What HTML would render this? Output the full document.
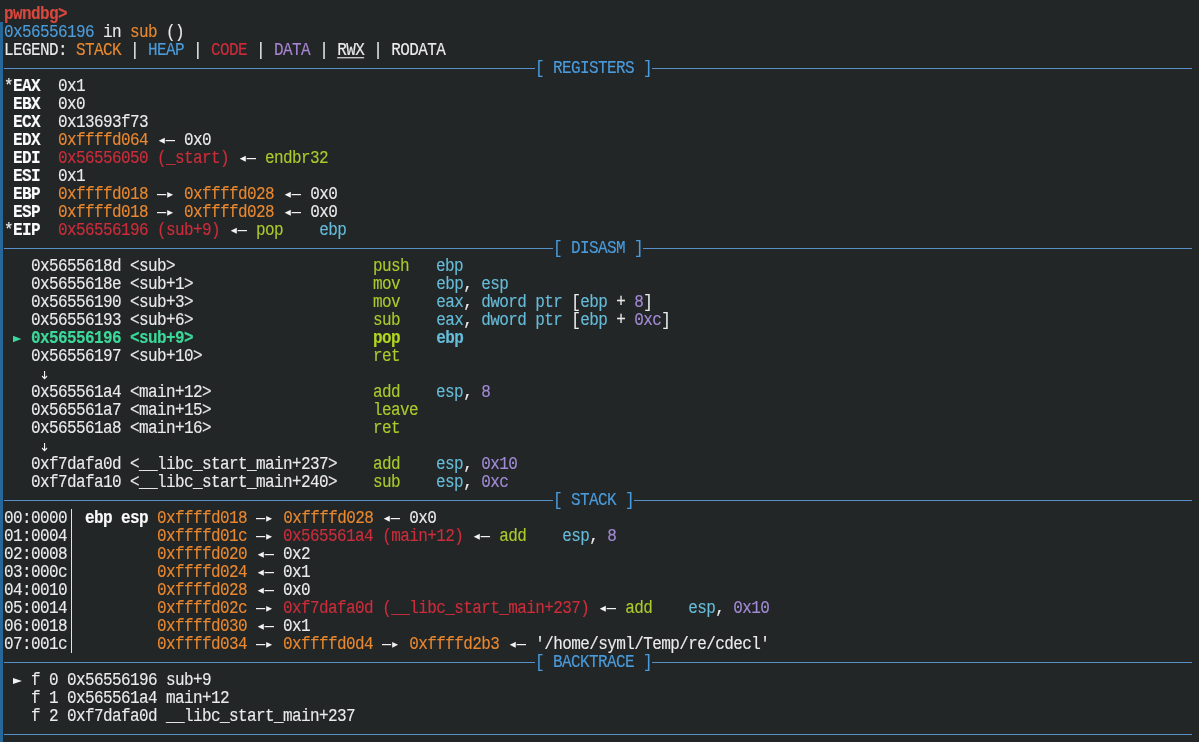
<!DOCTYPE html>
<html><head><meta charset="utf-8"><style>
html,body{margin:0;padding:0;}
body{width:1199px;height:742px;background:#232627;overflow:hidden;position:relative;font-family:"Liberation Mono",monospace;}
.bar{position:absolute;left:0;top:22px;width:3px;height:720px;background:#26679a;}
.r{position:absolute;left:4px;height:18px;line-height:18px;font-size:16px;letter-spacing:-0.6px;transform:scaleY(1.1);transform-origin:0 13px;will-change:transform;-webkit-text-stroke:0.12px currentColor;white-space:pre;color:#ebebeb;margin-top:2px;}
.b{font-weight:bold;}
.u{text-decoration:underline;text-underline-offset:1.5px;}
.w{color:#ebebeb;}
.w.b{color:#fafafa;}
.red{color:#cd2d3b;}
.red.b{color:#d8483e;}
.org{color:#e9882f;}
.blu{color:#4c9cdb;}
.pur{color:#a684cf;}
.pur2{color:#a38bd6;}
.yg{color:#aacb2c;}
.yg.b{color:#b0d620;}
.cy{color:#66bcd9;}
.grn{color:#3cd89a;}
.hd{color:#4a9bdc;}
.ln{position:absolute;height:1px;background:#5790c6;}
.vb{position:absolute;left:71px;width:1px;background:#e4e4e4;}
i.g{display:inline-block;width:9px;height:18px;vertical-align:top;position:relative;font-style:normal;}
svg.g{display:inline-block;vertical-align:top;position:relative;top:-2px;}

</style></head><body>
<div class="bar"></div>
<div class="r" style="top:4px"><span class="red b">pwndbg&gt;</span></div>
<div class="r" style="top:22px"><span class="blu">0x56556196</span><span class="w"> in </span><span class="org">sub</span><span class="w"> ()</span></div>
<div class="r" style="top:40px"><span class="w">LEGEND: </span><span class="org">STACK</span><span class="w"> | </span><span class="blu">HEAP</span><span class="w"> | </span><span class="red">CODE</span><span class="w"> | </span><span class="pur">DATA</span><span class="w"> | </span><span class="w u">RWX</span><span class="w"> | </span><span class="w">RODATA</span></div>
<div class="r" style="top:76px"><span class="w">*</span><span class="w b">EAX</span><span class="w">  0x1</span></div>
<div class="r" style="top:94px"><span class="w"> </span><span class="w b">EBX</span><span class="w">  0x0</span></div>
<div class="r" style="top:112px"><span class="w"> </span><span class="w b">ECX</span><span class="w">  0x13693f73</span></div>
<div class="r" style="top:130px"><span class="w"> </span><span class="w b">EDX</span><span class="w">  </span><span class="org">0xffffd064</span><span class="w"> </span><svg class="g" width="18" height="18" viewBox="0 0 18 18"><polygon points="1.7,11.18 7.8,8.45 7.8,13.91" fill="#f2f2f2"/><rect x="8.6" y="10.45" width="9.7" height="1.1" fill="#f2f2f2"/></svg><span class="w"> 0x0</span></div>
<div class="r" style="top:148px"><span class="w"> </span><span class="w b">EDI</span><span class="w">  </span><span class="red">0x56556050 (_start)</span><span class="w"> </span><svg class="g" width="18" height="18" viewBox="0 0 18 18"><polygon points="1.7,11.18 7.8,8.45 7.8,13.91" fill="#f2f2f2"/><rect x="8.6" y="10.45" width="9.7" height="1.1" fill="#f2f2f2"/></svg><span class="w"> </span><span class="yg">endbr32</span></div>
<div class="r" style="top:166px"><span class="w"> </span><span class="w b">ESI</span><span class="w">  0x1</span></div>
<div class="r" style="top:184px"><span class="w"> </span><span class="w b">EBP</span><span class="w">  </span><span class="org">0xffffd018</span><span class="w"> </span><svg class="g" width="18" height="18" viewBox="0 0 18 18"><rect x="-0.2" y="10.45" width="9.4" height="1.1" fill="#f2f2f2"/><polygon points="10.2,8.55 16.1,11.23 10.2,13.91" fill="#f2f2f2"/></svg><span class="w"> </span><span class="org">0xffffd028</span><span class="w"> </span><svg class="g" width="18" height="18" viewBox="0 0 18 18"><polygon points="1.7,11.18 7.8,8.45 7.8,13.91" fill="#f2f2f2"/><rect x="8.6" y="10.45" width="9.7" height="1.1" fill="#f2f2f2"/></svg><span class="w"> 0x0</span></div>
<div class="r" style="top:202px"><span class="w"> </span><span class="w b">ESP</span><span class="w">  </span><span class="org">0xffffd018</span><span class="w"> </span><svg class="g" width="18" height="18" viewBox="0 0 18 18"><rect x="-0.2" y="10.45" width="9.4" height="1.1" fill="#f2f2f2"/><polygon points="10.2,8.55 16.1,11.23 10.2,13.91" fill="#f2f2f2"/></svg><span class="w"> </span><span class="org">0xffffd028</span><span class="w"> </span><svg class="g" width="18" height="18" viewBox="0 0 18 18"><polygon points="1.7,11.18 7.8,8.45 7.8,13.91" fill="#f2f2f2"/><rect x="8.6" y="10.45" width="9.7" height="1.1" fill="#f2f2f2"/></svg><span class="w"> 0x0</span></div>
<div class="r" style="top:220px"><span class="w">*</span><span class="w b">EIP</span><span class="w">  </span><span class="red">0x56556196 (sub+9)</span><span class="w"> </span><svg class="g" width="18" height="18" viewBox="0 0 18 18"><polygon points="1.7,11.18 7.8,8.45 7.8,13.91" fill="#f2f2f2"/><rect x="8.6" y="10.45" width="9.7" height="1.1" fill="#f2f2f2"/></svg><span class="w"> </span><span class="yg">pop</span><span class="w">    </span><span class="cy">ebp</span></div>
<div class="r" style="top:256px"><span class="w">   0x5655618d &lt;sub&gt;</span><span class="w">                      </span><span class="yg">push</span><span class="w">   </span><span class="cy">ebp</span></div>
<div class="r" style="top:274px"><span class="w">   0x5655618e &lt;sub+1&gt;</span><span class="w">                    </span><span class="yg">mov</span><span class="w">    </span><span class="cy">ebp</span><span class="w">, </span><span class="cy">esp</span></div>
<div class="r" style="top:292px"><span class="w">   0x56556190 &lt;sub+3&gt;</span><span class="w">                    </span><span class="yg">mov</span><span class="w">    </span><span class="cy">eax</span><span class="w">, </span><span class="cy">dword ptr</span><span class="w"> [</span><span class="cy">ebp</span><span class="w"> + </span><span class="pur2">8</span><span class="w">]</span></div>
<div class="r" style="top:310px"><span class="w">   0x56556193 &lt;sub+6&gt;</span><span class="w">                    </span><span class="yg">sub</span><span class="w">    </span><span class="cy">eax</span><span class="w">, </span><span class="cy">dword ptr</span><span class="w"> [</span><span class="cy">ebp</span><span class="w"> + </span><span class="pur2">0xc</span><span class="w">]</span></div>
<div class="r" style="top:328px"><span class="w"> </span><svg class="g" width="9" height="18" viewBox="0 0 9 18"><polygon points="0,8.36 8.4,11.36 0,14.27" fill="#3cd89a"/></svg><span class="w"> </span><span class="grn b">0x56556196 &lt;sub+9&gt;</span><span class="w">                    </span><span class="yg b">pop</span><span class="w">    </span><span class="cy b">ebp</span></div>
<div class="r" style="top:346px"><span class="w">   0x56556197 &lt;sub+10&gt;</span><span class="w">                   </span><span class="yg">ret</span></div>
<div class="r" style="top:364px"><span class="w">    </span><svg class="g" width="9" height="18" viewBox="0 0 9 18"><rect x="4" y="7.73" width="1.1" height="6.72" fill="#f2f2f2"/><polyline points="2.1,12.27 4.55,14.64 7,12.27" fill="none" stroke="#f2f2f2" stroke-width="1.2"/></svg></div>
<div class="r" style="top:382px"><span class="w">   0x565561a4 &lt;main+12&gt;</span><span class="w">                  </span><span class="yg">add</span><span class="w">    </span><span class="cy">esp</span><span class="w">, </span><span class="pur2">8</span></div>
<div class="r" style="top:400px"><span class="w">   0x565561a7 &lt;main+15&gt;</span><span class="w">                  </span><span class="yg">leave</span></div>
<div class="r" style="top:418px"><span class="w">   0x565561a8 &lt;main+16&gt;</span><span class="w">                  </span><span class="yg">ret</span></div>
<div class="r" style="top:436px"><span class="w">    </span><svg class="g" width="9" height="18" viewBox="0 0 9 18"><rect x="4" y="7.73" width="1.1" height="6.72" fill="#f2f2f2"/><polyline points="2.1,12.27 4.55,14.64 7,12.27" fill="none" stroke="#f2f2f2" stroke-width="1.2"/></svg></div>
<div class="r" style="top:454px"><span class="w">   0xf7dafa0d &lt;__libc_start_main+237&gt;</span><span class="w">    </span><span class="yg">add</span><span class="w">    </span><span class="cy">esp</span><span class="w">, </span><span class="pur2">0x10</span></div>
<div class="r" style="top:472px"><span class="w">   0xf7dafa10 &lt;__libc_start_main+240&gt;</span><span class="w">    </span><span class="yg">sub</span><span class="w">    </span><span class="cy">esp</span><span class="w">, </span><span class="pur2">0xc</span></div>
<div class="r" style="top:508px"><span class="w">00:0000</span><span> </span><span class="w"> </span><span class="w b">ebp esp</span><span class="w"> </span><span class="org">0xffffd018</span><span class="w"> </span><svg class="g" width="18" height="18" viewBox="0 0 18 18"><rect x="-0.2" y="10.45" width="9.4" height="1.1" fill="#f2f2f2"/><polygon points="10.2,8.55 16.1,11.23 10.2,13.91" fill="#f2f2f2"/></svg><span class="w"> </span><span class="org">0xffffd028</span><span class="w"> </span><svg class="g" width="18" height="18" viewBox="0 0 18 18"><polygon points="1.7,11.18 7.8,8.45 7.8,13.91" fill="#f2f2f2"/><rect x="8.6" y="10.45" width="9.7" height="1.1" fill="#f2f2f2"/></svg><span class="w"> 0x0</span></div>
<div class="r" style="top:526px"><span class="w">01:0004</span><span> </span><span class="w">         </span><span class="org">0xffffd01c</span><span class="w"> </span><svg class="g" width="18" height="18" viewBox="0 0 18 18"><rect x="-0.2" y="10.45" width="9.4" height="1.1" fill="#f2f2f2"/><polygon points="10.2,8.55 16.1,11.23 10.2,13.91" fill="#f2f2f2"/></svg><span class="w"> </span><span class="red">0x565561a4 (main+12)</span><span class="w"> </span><svg class="g" width="18" height="18" viewBox="0 0 18 18"><polygon points="1.7,11.18 7.8,8.45 7.8,13.91" fill="#f2f2f2"/><rect x="8.6" y="10.45" width="9.7" height="1.1" fill="#f2f2f2"/></svg><span class="w"> </span><span class="yg">add</span><span class="w">    </span><span class="cy">esp</span><span class="w">, </span><span class="pur2">8</span></div>
<div class="r" style="top:544px"><span class="w">02:0008</span><span> </span><span class="w">         </span><span class="org">0xffffd020</span><span class="w"> </span><svg class="g" width="18" height="18" viewBox="0 0 18 18"><polygon points="1.7,11.18 7.8,8.45 7.8,13.91" fill="#f2f2f2"/><rect x="8.6" y="10.45" width="9.7" height="1.1" fill="#f2f2f2"/></svg><span class="w"> 0x2</span></div>
<div class="r" style="top:562px"><span class="w">03:000c</span><span> </span><span class="w">         </span><span class="org">0xffffd024</span><span class="w"> </span><svg class="g" width="18" height="18" viewBox="0 0 18 18"><polygon points="1.7,11.18 7.8,8.45 7.8,13.91" fill="#f2f2f2"/><rect x="8.6" y="10.45" width="9.7" height="1.1" fill="#f2f2f2"/></svg><span class="w"> 0x1</span></div>
<div class="r" style="top:580px"><span class="w">04:0010</span><span> </span><span class="w">         </span><span class="org">0xffffd028</span><span class="w"> </span><svg class="g" width="18" height="18" viewBox="0 0 18 18"><polygon points="1.7,11.18 7.8,8.45 7.8,13.91" fill="#f2f2f2"/><rect x="8.6" y="10.45" width="9.7" height="1.1" fill="#f2f2f2"/></svg><span class="w"> 0x0</span></div>
<div class="r" style="top:598px"><span class="w">05:0014</span><span> </span><span class="w">         </span><span class="org">0xffffd02c</span><span class="w"> </span><svg class="g" width="18" height="18" viewBox="0 0 18 18"><rect x="-0.2" y="10.45" width="9.4" height="1.1" fill="#f2f2f2"/><polygon points="10.2,8.55 16.1,11.23 10.2,13.91" fill="#f2f2f2"/></svg><span class="w"> </span><span class="red">0xf7dafa0d (__libc_start_main+237)</span><span class="w"> </span><svg class="g" width="18" height="18" viewBox="0 0 18 18"><polygon points="1.7,11.18 7.8,8.45 7.8,13.91" fill="#f2f2f2"/><rect x="8.6" y="10.45" width="9.7" height="1.1" fill="#f2f2f2"/></svg><span class="w"> </span><span class="yg">add</span><span class="w">    </span><span class="cy">esp</span><span class="w">, </span><span class="pur2">0x10</span></div>
<div class="r" style="top:616px"><span class="w">06:0018</span><span> </span><span class="w">         </span><span class="org">0xffffd030</span><span class="w"> </span><svg class="g" width="18" height="18" viewBox="0 0 18 18"><polygon points="1.7,11.18 7.8,8.45 7.8,13.91" fill="#f2f2f2"/><rect x="8.6" y="10.45" width="9.7" height="1.1" fill="#f2f2f2"/></svg><span class="w"> 0x1</span></div>
<div class="r" style="top:634px"><span class="w">07:001c</span><span> </span><span class="w">         </span><span class="org">0xffffd034</span><span class="w"> </span><svg class="g" width="18" height="18" viewBox="0 0 18 18"><rect x="-0.2" y="10.45" width="9.4" height="1.1" fill="#f2f2f2"/><polygon points="10.2,8.55 16.1,11.23 10.2,13.91" fill="#f2f2f2"/></svg><span class="w"> </span><span class="org">0xffffd0d4</span><span class="w"> </span><svg class="g" width="18" height="18" viewBox="0 0 18 18"><rect x="-0.2" y="10.45" width="9.4" height="1.1" fill="#f2f2f2"/><polygon points="10.2,8.55 16.1,11.23 10.2,13.91" fill="#f2f2f2"/></svg><span class="w"> </span><span class="org">0xffffd2b3</span><span class="w"> </span><svg class="g" width="18" height="18" viewBox="0 0 18 18"><polygon points="1.7,11.18 7.8,8.45 7.8,13.91" fill="#f2f2f2"/><rect x="8.6" y="10.45" width="9.7" height="1.1" fill="#f2f2f2"/></svg><span class="w"> &#x27;/home/syml/Temp/re/cdecl&#x27;</span></div>
<div class="r" style="top:670px"><span class="w"> </span><svg class="g" width="9" height="18" viewBox="0 0 9 18"><polygon points="-0.3,8.45 9,11.27 -0.3,14.09" fill="#f2f2f2"/></svg><span class="w"> f 0 0x56556196 sub+9</span></div>
<div class="r" style="top:688px"><span class="w">   f 1 0x565561a4 main+12</span></div>
<div class="r" style="top:706px"><span class="w">   f 2 0xf7dafa0d __libc_start_main+237</span></div>
<div class="ln" style="top:68px;left:4px;width:531px"></div>
<div class="ln" style="top:68px;left:652px;width:540px"></div>
<div class="r hd" style="top:58px;left:535px">[ REGISTERS ]</div>
<div class="ln" style="top:248px;left:4px;width:549px"></div>
<div class="ln" style="top:248px;left:643px;width:549px"></div>
<div class="r hd" style="top:238px;left:553px">[ DISASM ]</div>
<div class="ln" style="top:500px;left:4px;width:549px"></div>
<div class="ln" style="top:500px;left:634px;width:558px"></div>
<div class="r hd" style="top:490px;left:553px">[ STACK ]</div>
<div class="ln" style="top:662px;left:4px;width:531px"></div>
<div class="ln" style="top:662px;left:652px;width:540px"></div>
<div class="r hd" style="top:652px;left:535px">[ BACKTRACE ]</div>
<div class="ln" style="top:734px;left:4px;width:1188px"></div>
<div class="vb" style="top:509px;height:144px"></div>
</body></html>
